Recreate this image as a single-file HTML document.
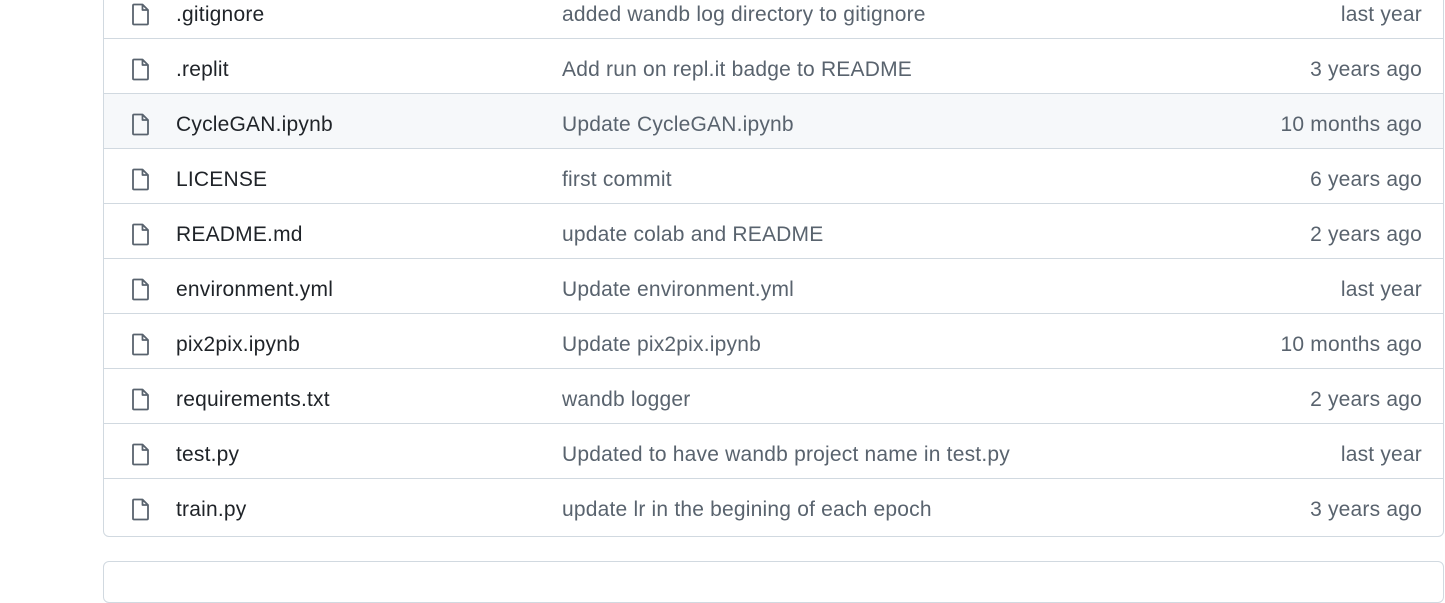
<!DOCTYPE html>
<html><head><style>
body{margin:0;width:1445px;height:563px;background:#fff;overflow:hidden;position:relative;font-family:"Liberation Sans",sans-serif;}
.box{position:absolute;left:103px;top:-17px;width:1339px;height:552px;border:1px solid #d1d9e0;border-radius:6px;overflow:hidden;}
.row{position:relative;height:54px;border-top:1px solid #d1d9e0;}
.row:first-child{border-top:none;}
.row.h{background:#f6f8fa;}
.row svg{position:absolute;left:25px;top:18px;}
.n,.m,.t{position:absolute;top:19px;font-size:21px;letter-spacing:0.2px;line-height:24px;}
.n{left:72px;color:#1f2328;}
.m{left:458px;color:#59636e;}
.t{right:21px;color:#59636e;}
.box2{position:absolute;left:103px;top:561px;width:1339px;height:40px;border:1px solid #d1d9e0;border-radius:6px;}
</style></head><body>
<div class="box">
<div class="row"><svg width="24" height="24" viewBox="0 0 24 24"><path d="M5 2.5h8.5l5.5 5.5v13.5a1 1 0 0 1-1 1H5a1 1 0 0 1-1-1v-18a1 1 0 0 1 1-1zM13.5 2.5v5.5h5.5" fill="none" stroke="#59636e" stroke-width="1.8" stroke-linejoin="round"/></svg><span class="n">.gitignore</span><span class="m">added wandb log directory to gitignore</span><span class="t">last year</span></div>
<div class="row"><svg width="24" height="24" viewBox="0 0 24 24"><path d="M5 2.5h8.5l5.5 5.5v13.5a1 1 0 0 1-1 1H5a1 1 0 0 1-1-1v-18a1 1 0 0 1 1-1zM13.5 2.5v5.5h5.5" fill="none" stroke="#59636e" stroke-width="1.8" stroke-linejoin="round"/></svg><span class="n">.replit</span><span class="m">Add run on repl.it badge to README</span><span class="t">3 years ago</span></div>
<div class="row h"><svg width="24" height="24" viewBox="0 0 24 24"><path d="M5 2.5h8.5l5.5 5.5v13.5a1 1 0 0 1-1 1H5a1 1 0 0 1-1-1v-18a1 1 0 0 1 1-1zM13.5 2.5v5.5h5.5" fill="none" stroke="#59636e" stroke-width="1.8" stroke-linejoin="round"/></svg><span class="n">CycleGAN.ipynb</span><span class="m">Update CycleGAN.ipynb</span><span class="t">10 months ago</span></div>
<div class="row"><svg width="24" height="24" viewBox="0 0 24 24"><path d="M5 2.5h8.5l5.5 5.5v13.5a1 1 0 0 1-1 1H5a1 1 0 0 1-1-1v-18a1 1 0 0 1 1-1zM13.5 2.5v5.5h5.5" fill="none" stroke="#59636e" stroke-width="1.8" stroke-linejoin="round"/></svg><span class="n">LICENSE</span><span class="m">first commit</span><span class="t">6 years ago</span></div>
<div class="row"><svg width="24" height="24" viewBox="0 0 24 24"><path d="M5 2.5h8.5l5.5 5.5v13.5a1 1 0 0 1-1 1H5a1 1 0 0 1-1-1v-18a1 1 0 0 1 1-1zM13.5 2.5v5.5h5.5" fill="none" stroke="#59636e" stroke-width="1.8" stroke-linejoin="round"/></svg><span class="n">README.md</span><span class="m">update colab and README</span><span class="t">2 years ago</span></div>
<div class="row"><svg width="24" height="24" viewBox="0 0 24 24"><path d="M5 2.5h8.5l5.5 5.5v13.5a1 1 0 0 1-1 1H5a1 1 0 0 1-1-1v-18a1 1 0 0 1 1-1zM13.5 2.5v5.5h5.5" fill="none" stroke="#59636e" stroke-width="1.8" stroke-linejoin="round"/></svg><span class="n">environment.yml</span><span class="m">Update environment.yml</span><span class="t">last year</span></div>
<div class="row"><svg width="24" height="24" viewBox="0 0 24 24"><path d="M5 2.5h8.5l5.5 5.5v13.5a1 1 0 0 1-1 1H5a1 1 0 0 1-1-1v-18a1 1 0 0 1 1-1zM13.5 2.5v5.5h5.5" fill="none" stroke="#59636e" stroke-width="1.8" stroke-linejoin="round"/></svg><span class="n">pix2pix.ipynb</span><span class="m">Update pix2pix.ipynb</span><span class="t">10 months ago</span></div>
<div class="row"><svg width="24" height="24" viewBox="0 0 24 24"><path d="M5 2.5h8.5l5.5 5.5v13.5a1 1 0 0 1-1 1H5a1 1 0 0 1-1-1v-18a1 1 0 0 1 1-1zM13.5 2.5v5.5h5.5" fill="none" stroke="#59636e" stroke-width="1.8" stroke-linejoin="round"/></svg><span class="n">requirements.txt</span><span class="m">wandb logger</span><span class="t">2 years ago</span></div>
<div class="row"><svg width="24" height="24" viewBox="0 0 24 24"><path d="M5 2.5h8.5l5.5 5.5v13.5a1 1 0 0 1-1 1H5a1 1 0 0 1-1-1v-18a1 1 0 0 1 1-1zM13.5 2.5v5.5h5.5" fill="none" stroke="#59636e" stroke-width="1.8" stroke-linejoin="round"/></svg><span class="n">test.py</span><span class="m">Updated to have wandb project name in test.py</span><span class="t">last year</span></div>
<div class="row"><svg width="24" height="24" viewBox="0 0 24 24"><path d="M5 2.5h8.5l5.5 5.5v13.5a1 1 0 0 1-1 1H5a1 1 0 0 1-1-1v-18a1 1 0 0 1 1-1zM13.5 2.5v5.5h5.5" fill="none" stroke="#59636e" stroke-width="1.8" stroke-linejoin="round"/></svg><span class="n">train.py</span><span class="m">update lr in the begining of each epoch</span><span class="t">3 years ago</span></div>
</div>
<div class="box2"></div>
</body></html>
